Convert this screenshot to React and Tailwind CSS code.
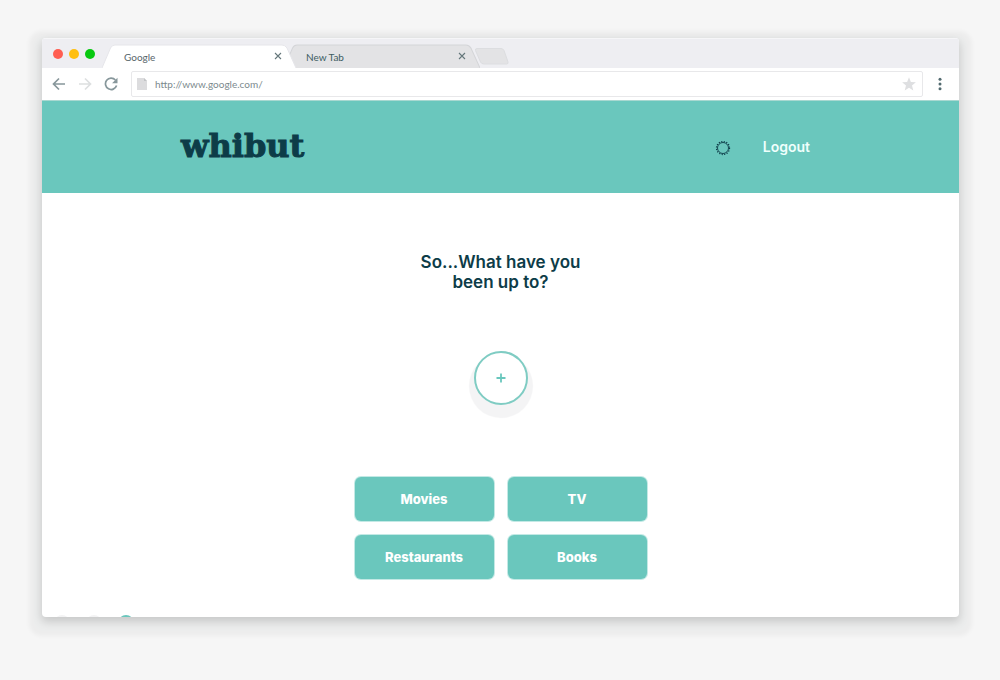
import React from "react";

const categories = ["Movies", "TV", "Restaurants", "Books"];

function Tab({ label, active, className }) {
  return (
    <div className={"grid h-6 items-center " + className}>
      <svg viewBox="0 0 194 24" preserveAspectRatio="none" className="col-start-1 row-start-1 h-6 w-full" aria-hidden="true">
        <path
          d="M0 24 L8.500 4 Q10 1 13 1 H180 Q183 1 185 4 L194 24"
          fill={active ? "#ffffff" : "#e3e3e5"}
          stroke={active ? "#e6e6ea" : "#d4d5d8"}
          strokeWidth="1"
        />
      </svg>
      <div className="col-start-1 row-start-1 flex items-center justify-between pt-0.5 pr-3.5 pl-[22px]">
        <button type="button" className={"text-[10px] leading-4 " + (active ? "text-[#57666b]" : "text-[#3d5d62]")}>
          {label}
        </button>
        <button type="button" aria-label={"Close " + label} className="pb-0.5 text-[#65777b]">
          <svg width="8" height="8" viewBox="0 0 8 8" stroke="currentColor" strokeWidth="1.100" aria-hidden="true">
            <path d="M1 1 L7 7 M7 1 L1 7" />
          </svg>
        </button>
      </div>
    </div>
  );
}

function TabStrip() {
  return (
    <div className="flex h-[30px] items-end border-t border-[#f6f6f8] bg-[#eeeef2] pl-[11px]">
      <div className="flex h-[29px] w-[49px] items-center gap-1.5">
        <span className="size-2.5 rounded-full bg-[#ff5e52]" />
        <span className="size-2.5 rounded-full bg-[#ffbf0f]" />
        <span className="size-2.5 rounded-full bg-[#07c910]" />
      </div>
      <Tab label="Google" active className="z-10 w-[194px]" />
      <Tab label="New Tab" className="-ml-3 w-[196px]" />
      <button type="button" aria-label="Open a new tab" className="-ml-1.5 h-6">
        <svg width="36" height="24" viewBox="0 0 36 24" aria-hidden="true">
          <path
            d="M3 4.500 H27 Q29 4.500 30 6.500 L34 18 Q34.500 20 32.500 20 H10 Q7.500 20 6.500 18 L1.500 6.500 Q1 4.500 3 4.500Z"
            fill="#e3e3e5"
            stroke="#dcdde0"
          />
        </svg>
      </button>
    </div>
  );
}

function Toolbar() {
  return (
    <div className="flex h-8 items-center bg-white pl-[10px]">
      <div className="flex w-[79px] items-center gap-3">
        <button type="button" aria-label="Back">
          <svg width="14" height="14" viewBox="0 0 14 14" fill="none" stroke="#87979b" strokeWidth="1.700" aria-hidden="true">
            <path d="M13 7 H2 M7 1.500 L1.500 7 L7 12.500" />
          </svg>
        </button>
        <button type="button" aria-label="Forward">
          <svg width="14" height="14" viewBox="0 0 14 14" fill="none" stroke="#dddfe0" strokeWidth="1.700" aria-hidden="true">
            <path d="M1 7 H12 M7 1.500 L12.500 7 L7 12.500" />
          </svg>
        </button>
        <button type="button" aria-label="Reload">
          <svg width="14" height="14" viewBox="0 0 14 14" fill="none" aria-hidden="true">
            <path d="M11.400 3 A5.700 5.700 0 1 0 12.600 8.600" stroke="#87979b" strokeWidth="1.700" />
            <path d="M13.500 0.800 V6.200 H8.100Z" fill="#87979b" />
          </svg>
        </button>
      </div>
      <div className="flex h-[26px] flex-1 items-center rounded-xs border border-[#e8e8ea] pr-1.5 pl-[5px]">
        <svg width="10" height="12" viewBox="0 0 10 12" aria-hidden="true">
          <path d="M0 0 H7 L10 3 V12 H0Z" fill="#dcdcde" />
          <path d="M7 0 V3 H10Z" fill="#c2c4c6" />
        </svg>
        <input
          type="text"
          aria-label="Address"
          defaultValue="http://www.google.com/"
          className="ml-2 min-w-0 flex-1 bg-transparent text-[10px] leading-4 text-[#7c8a8e] outline-none"
        />
        <button type="button" aria-label="Bookmark this page">
          <svg width="14" height="14" viewBox="0 0 14 14" fill="#dedfe1" aria-hidden="true">
            <path d="M7 0.300 L8.900 5 L13.900 5.300 L10 8.500 L11.300 13.500 L7 10.700 L2.700 13.500 L4 8.500 L0.100 5.300 L5.100 5Z" />
          </svg>
        </button>
      </div>
      <button type="button" aria-label="Menu" className="flex w-9 justify-center pr-0.5">
        <svg width="4" height="14" viewBox="0 0 4 14" fill="#526a6f" aria-hidden="true">
          <circle cx="2" cy="2.300" r="1.500" />
          <circle cx="2" cy="7" r="1.500" />
          <circle cx="2" cy="11.700" r="1.500" />
        </svg>
      </button>
    </div>
  );
}

function SiteHeader() {
  return (
    <header className="flex h-[93px] items-center justify-between border-t border-[#a9d8d1] bg-[#6ac7bd] pr-[149px] pl-[139px]">
      <a
        href="#home"
        className="pb-0.5 font-['DejaVu_Serif',serif] text-[32px] leading-9 font-bold text-[#0d3c48] [-webkit-text-stroke:1px_#0d3c48]"
      >
        whibut
      </a>
      <nav className="flex items-center gap-8">
        <button type="button" aria-label="Settings" className="pt-0.5">
          <svg width="16" height="16" viewBox="0 0 16 16" fill="none" stroke="#0d3c48" aria-hidden="true">
            <circle cx="8" cy="8" r="5.500" strokeWidth="0.900" />
            <circle cx="8" cy="8" r="6.500" strokeWidth="1.300" strokeDasharray="1.100 1.453" />
          </svg>
        </button>
        <a href="#logout" className="text-sm leading-5 font-semibold text-[#effffc]">
          Logout
        </a>
      </nav>
    </header>
  );
}

export default function App() {
  return (
    <div className="flex min-h-screen flex-col bg-[#f6f6f6] pt-[38px] pr-[41px] pb-[63px] pl-[42px] font-['Lato',sans-serif]">
      <div className="flex flex-1 flex-col overflow-hidden rounded-sm bg-white shadow-[0_4px_8px_1px_rgba(0,0,0,0.15),0_6px_4px_13px_rgba(0,20,30,0.04)]">
        <TabStrip />
        <Toolbar />
        <div className="flex flex-1 flex-col font-['Inter',sans-serif]">
          <SiteHeader />
          <main className="flex flex-1 flex-col items-center pt-[59px]">
            <h1 className="w-44 text-center text-[17px] leading-5 font-semibold text-[#0d3c48]">
              So...What have you been up to?
            </h1>
            <button
              type="button"
              aria-label="Add an activity"
              className="mt-[59px] flex size-[54px] items-center justify-center rounded-full border-2 border-[#7fccc3] bg-white shadow-[0_8px_1px_5px_#f4f4f5]"
            >
              <svg width="10" height="10" viewBox="0 0 10 10" stroke="#6ac7bd" strokeWidth="1.800" aria-hidden="true">
                <path d="M5 0.500 V9.500 M0.500 5 H9.500" />
              </svg>
            </button>
            <div className="mt-[72px] grid grid-cols-2 gap-3.5">
              {categories.map((name) => (
                <button
                  key={name}
                  type="button"
                  className="h-11 w-[139px] rounded-md bg-[#6ac7bd] text-[13px] leading-5 font-extrabold text-white ring-1 ring-[#6ac7bd]/40"
                >
                  {name}
                </button>
              ))}
            </div>
            <div className="mt-auto flex h-0.5 gap-4 self-start overflow-hidden pl-3" aria-hidden="true">
              <span className="h-5 w-4 rounded-full bg-[#f3f3f4]" />
              <span className="h-5 w-4 rounded-full bg-[#f3f3f4]" />
              <span className="size-4 rounded-full bg-[#6ac7bd]" />
            </div>
          </main>
        </div>
      </div>
    </div>
  );
}
